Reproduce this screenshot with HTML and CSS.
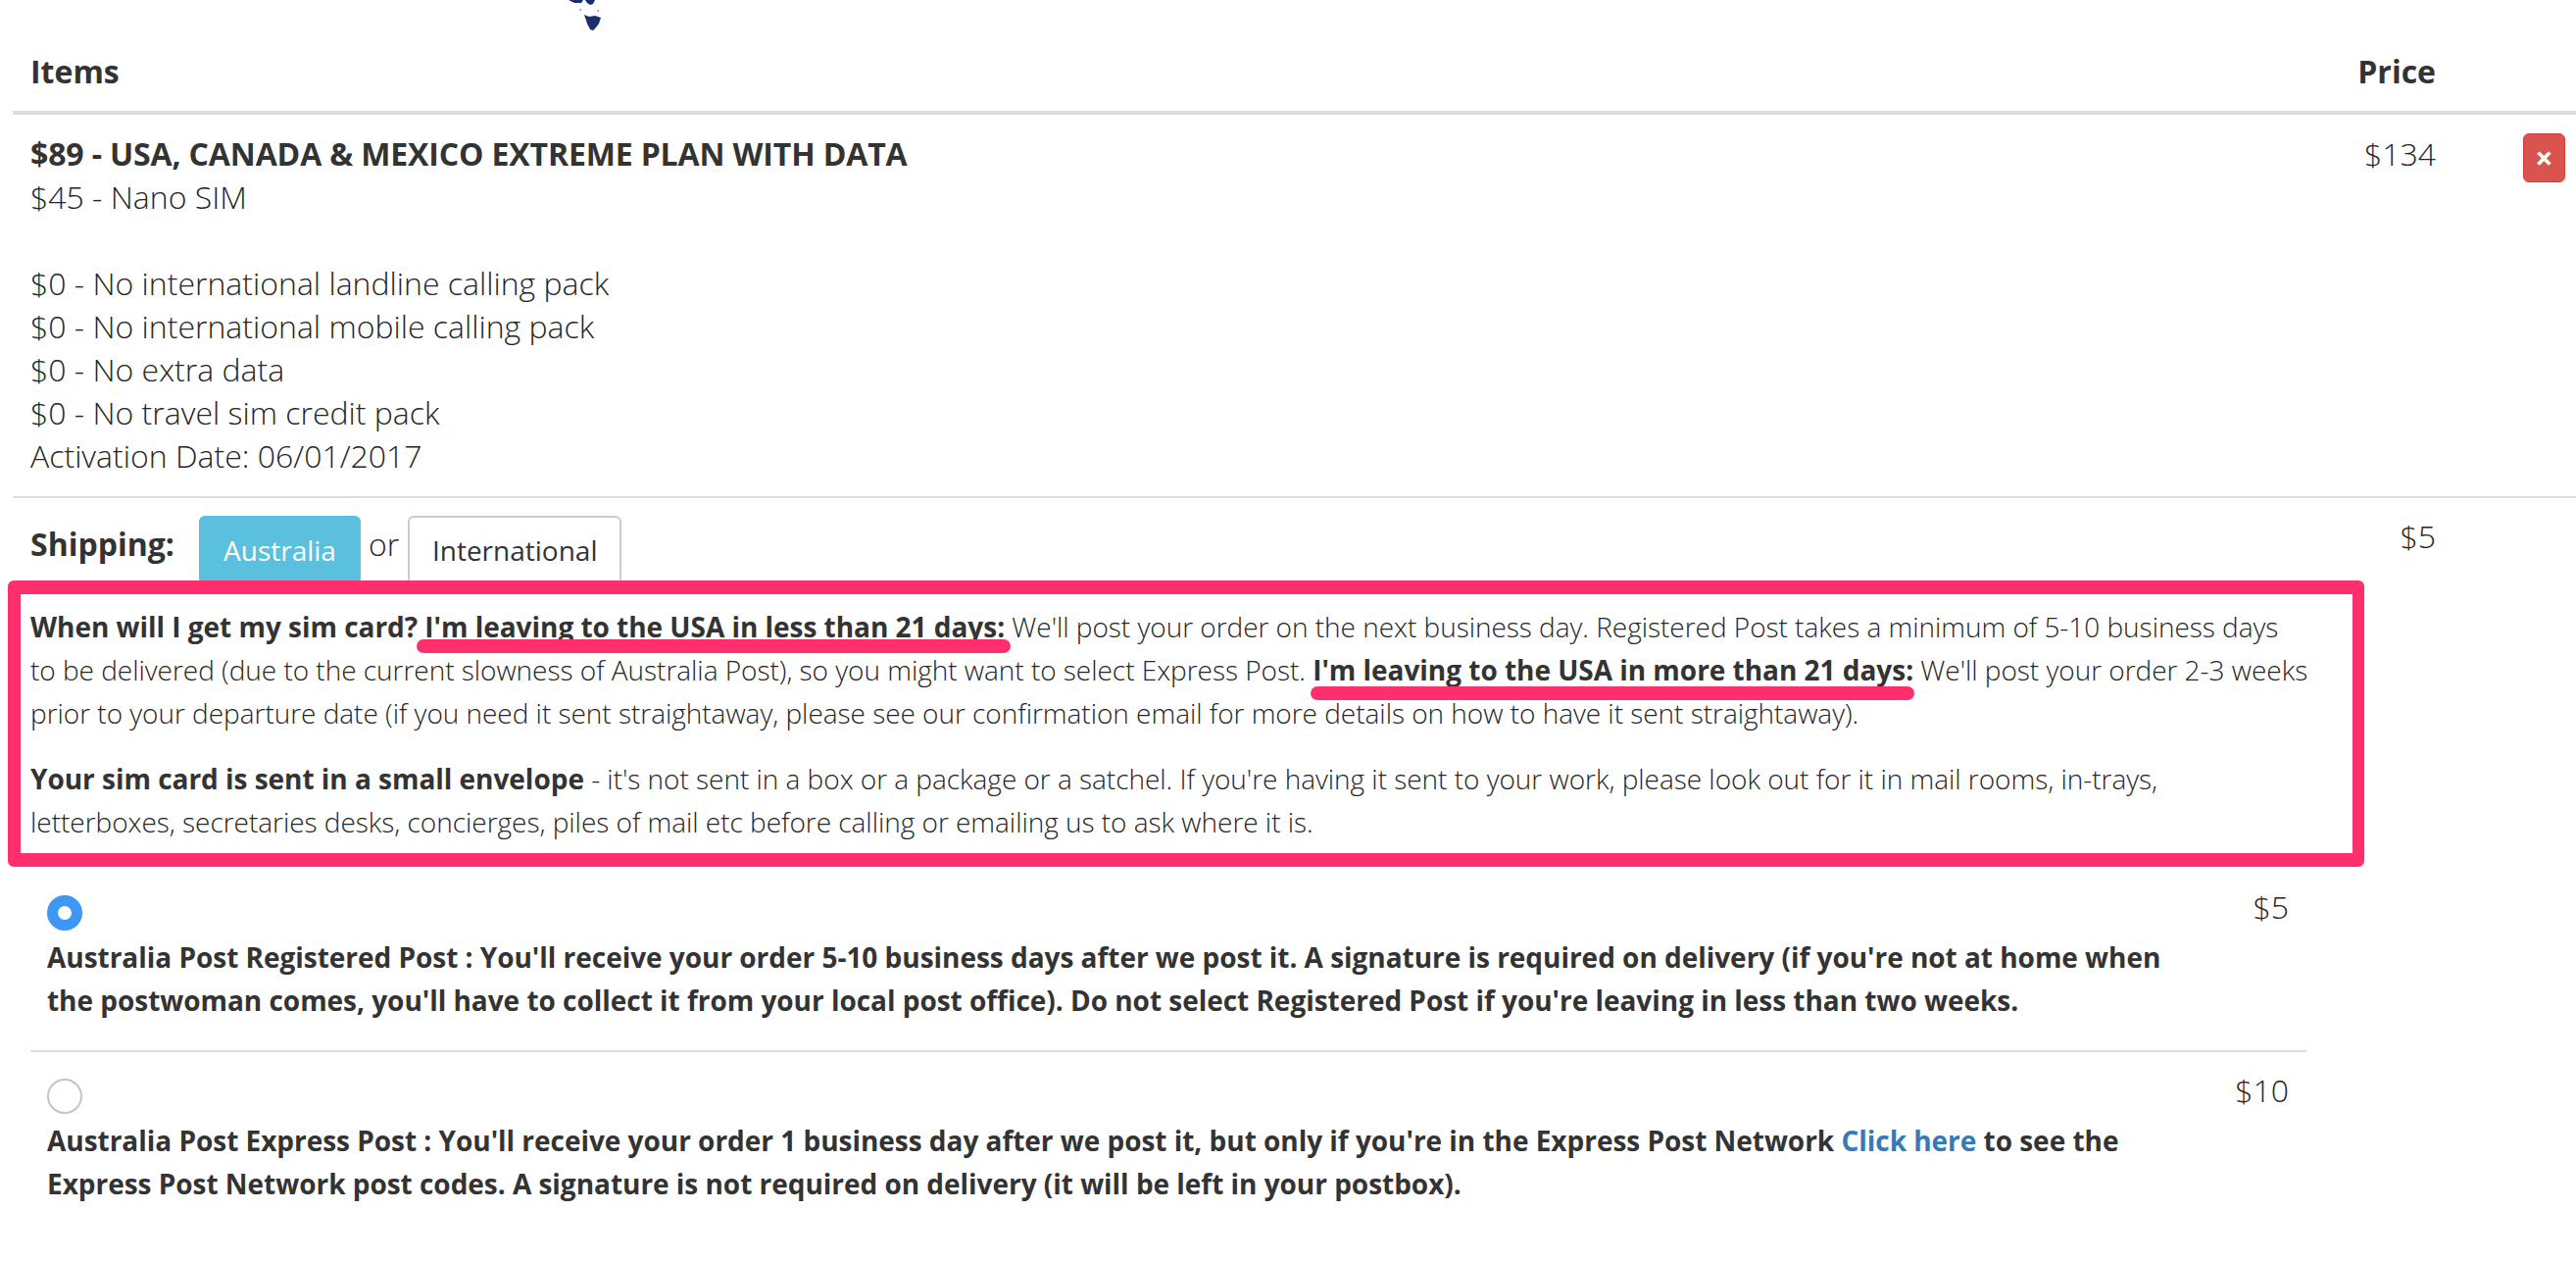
FILE: index.html
```html
<!DOCTYPE html>
<html lang="en">
<head>
    <meta charset="UTF-8">
    <meta name="viewport" content="width=device-width, initial-scale=1.0">
    <title>Cart</title>
    <link rel="stylesheet" href="styles.css">
</head>
<body>
    <div class="logo-top">
        <svg width="36" height="32" viewBox="0 0 36 32">
            <path d="M0 0 H15 L13 3 L6 3 Z M17 0 H27 L25 4 L22 5 L19 3 Z" fill="#1b2f6e"/>
            <path d="M11.500 9 h1.500 v2 h-1.500 Z M29.500 10 h1.500 v2 h-1.500 Z" fill="#8d96b5"/>
            <path d="M16 15 L21 17 L27 16 L33 18 L31 24 L28 28 L25 31 L22 30 L19 24 Z" fill="#1b2f6e"/>
        </svg>
    </div>

    <div class="cart-head">
        <div class="col-main">Items</div>
        <div class="col-price">Price</div>
        <div class="col-action"></div>
    </div>

    <div class="cart-row plan-row">
        <div class="col-main">
            <div class="plan-name">$89 - USA, CANADA &amp; MEXICO EXTREME PLAN WITH DATA</div>
            <div>$45 - Nano SIM</div>
            <div class="gap-line"></div>
            <div>$0 - No international landline calling pack</div>
            <div>$0 - No international mobile calling pack</div>
            <div>$0 - No extra data</div>
            <div>$0 - No travel sim credit pack</div>
            <div>Activation Date: 06/01/2017</div>
        </div>
        <div class="col-price">$134</div>
        <div class="col-action"><button class="btn-remove">×</button></div>
    </div>

    <div class="cart-row shipping-row">
        <div class="col-main">
            <div class="shipping-tabs">
                <strong class="shipping-label">Shipping:</strong>
                <a class="tab tab-active">Australia</a>
                <span class="tab-or">or</span>
                <a class="tab">International</a>
            </div>
            <p class="note">
                <strong>When will I get my sim card? I'm leaving to the USA in less than 21 days:</strong> We'll post your order on the next business day. Registered Post takes a minimum of 5-10 business days<br>to be delivered (due to the current slowness of Australia Post), so you might want to select Express Post. <strong>I'm leaving to the USA in more than 21 days:</strong> We'll post your order 2-3 weeks prior to your departure date (if you need it sent straightaway, please see our confirmation email for more details on how to have it sent straightaway).
            </p>
            <p class="note">
                <strong>Your sim card is sent in a small envelope</strong> - it's not sent in a box or a package or a satchel. If you're having it sent to your work, please look out for it in mail rooms, in-trays,<br>letterboxes, secretaries desks, concierges, piles of mail etc before calling or emailing us to ask where it is.
            </p>
            <div class="options">
                <div class="option">
                    <div class="option-top">
                        <span class="radio radio-on"></span>
                        <span class="option-price">$5</span>
                    </div>
                    <div class="option-text">Australia Post Registered Post : You'll receive your order 5-10 business days after we post it. A signature is required on delivery (if you're not at home when the postwoman comes, you'll have to collect it from your local post office). Do not select Registered Post if you're leaving in less than two weeks.</div>
                </div>
                <div class="option">
                    <div class="option-top">
                        <span class="radio"></span>
                        <span class="option-price">$10</span>
                    </div>
                    <div class="option-text">Australia Post Express Post : You'll receive your order 1 business day after we post it, but only if you're in the Express Post Network <a class="link">Click here</a> to see the Express Post Network post codes. A signature is not required on delivery (it will be left in your postbox).</div>
                </div>
            </div>
        </div>
        <div class="col-price">$5</div>
        <div class="col-action"></div>
    </div>

    <!-- pink marks drawn over the page -->
    <div class="mark mark-box"></div>
    <div class="mark mark-line mark-line-1"></div>
    <div class="mark mark-line mark-line-2"></div>
</body>
</html>
```

FILE: styles.css
```css
* { margin: 0; padding: 0; box-sizing: border-box; }

body {
    position: relative;
    height: 1286px;
    overflow: hidden;
    background: #fff;
    color: #262626;
    font-family: "Open Sans", sans-serif;
    font-size: 32px;
    font-weight: 300;
    line-height: 44px;
    padding-left: 13px;
}

strong {
    color: #333;
    font-weight: 700;
}

.logo-top {
    height: 32px;
    padding-left: 567px;
}

.logo-top svg {
    display: block;
}

.cart-head,
.cart-row {
    display: flex;
}

.cart-head {
    height: 85px;
    padding-top: 19px;
    border-bottom: 4px solid #ddd;
    color: #333;
    font-weight: 700;
}

.col-main {
    flex: 1;
    min-width: 0;
    padding-left: 18px;
}

.col-price {
    width: 150px;
    padding-top: 17px;
    text-align: right;
}

.cart-head .col-price {
    padding-top: 0;
}

.plan-row .col-price {
    padding-top: 18px;
}

.col-action {
    width: 143px;
}

.plan-row {
    height: 391px;
    border-bottom: 2px solid #ddd;
}

.plan-row .col-main {
    padding-top: 18px;
}

.plan-name {
    color: #333;
    font-weight: 700;
    letter-spacing: -0.14px;
}

.gap-line {
    height: 44px;
}

.btn-remove {
    display: block;
    width: 43px;
    height: 50px;
    margin: 19px 0 0 89px;
    border: 1px solid #d43f3a;
    border-radius: 6px;
    background: #d9534f;
    color: #fff;
    font-family: "Open Sans", sans-serif;
    font-size: 32px;
    font-weight: 700;
    line-height: 46px;
}

.shipping-tabs {
    display: flex;
    align-items: flex-start;
    height: 109px;
    padding-top: 18px;
}

.shipping-label {
    width: 172px;
    margin-top: 7px;
}

.tab {
    display: block;
    height: 70px;
    padding: 11px 23px;
    border: 2px solid #ccc;
    border-radius: 6px;
    color: #333;
    font-size: 28px;
    font-weight: 400;
}

.tab-active {
    background: #5bc0de;
    border-color: #5bc0de;
    color: #fff;
}

.tab-or {
    width: 48px;
    margin-top: 7px;
    padding-left: 8px;
}

.note {
    width: 2350px;
    margin-bottom: 23px;
    font-size: 28px;
    letter-spacing: -0.03px;
}

.options {
    width: 2322px;
    margin-top: 53px;
}

.option {
    padding: 0 18px 29px 17px;
    margin-bottom: 27px;
    border-bottom: 2px solid #ddd;
}

.option:last-child {
    border-bottom: none;
}

.option-top {
    display: flex;
    justify-content: space-between;
    height: 41px;
}

.option-price {
    margin-top: -10px;
}

.radio {
    width: 36px;
    height: 36px;
    border: 2px solid #c4c4c4;
    border-radius: 50%;
    background: #fff;
}

.radio-on {
    border: 11px solid #3d97f5;
}

.option-text {
    width: 2182px;
    color: #333;
    font-size: 28px;
    font-weight: 700;
    letter-spacing: -0.03px;
}

.link {
    color: #337ab7;
}

.mark {
    position: absolute;
    border-color: #ff2f6d;
    border-style: solid;
}

.mark-box {
    left: 8px;
    top: 592px;
    width: 2404px;
    height: 292px;
    border-width: 14px 12px 14px 13px;
    border-radius: 6px;
}

.mark-line {
    height: 14px;
    border-width: 0;
    background: #ff2f6d;
    border-radius: 7px;
}

.mark-line-1 {
    left: 425px;
    top: 652px;
    width: 606px;
}

.mark-line-2 {
    left: 1337px;
    top: 700px;
    width: 616px;
}
```
